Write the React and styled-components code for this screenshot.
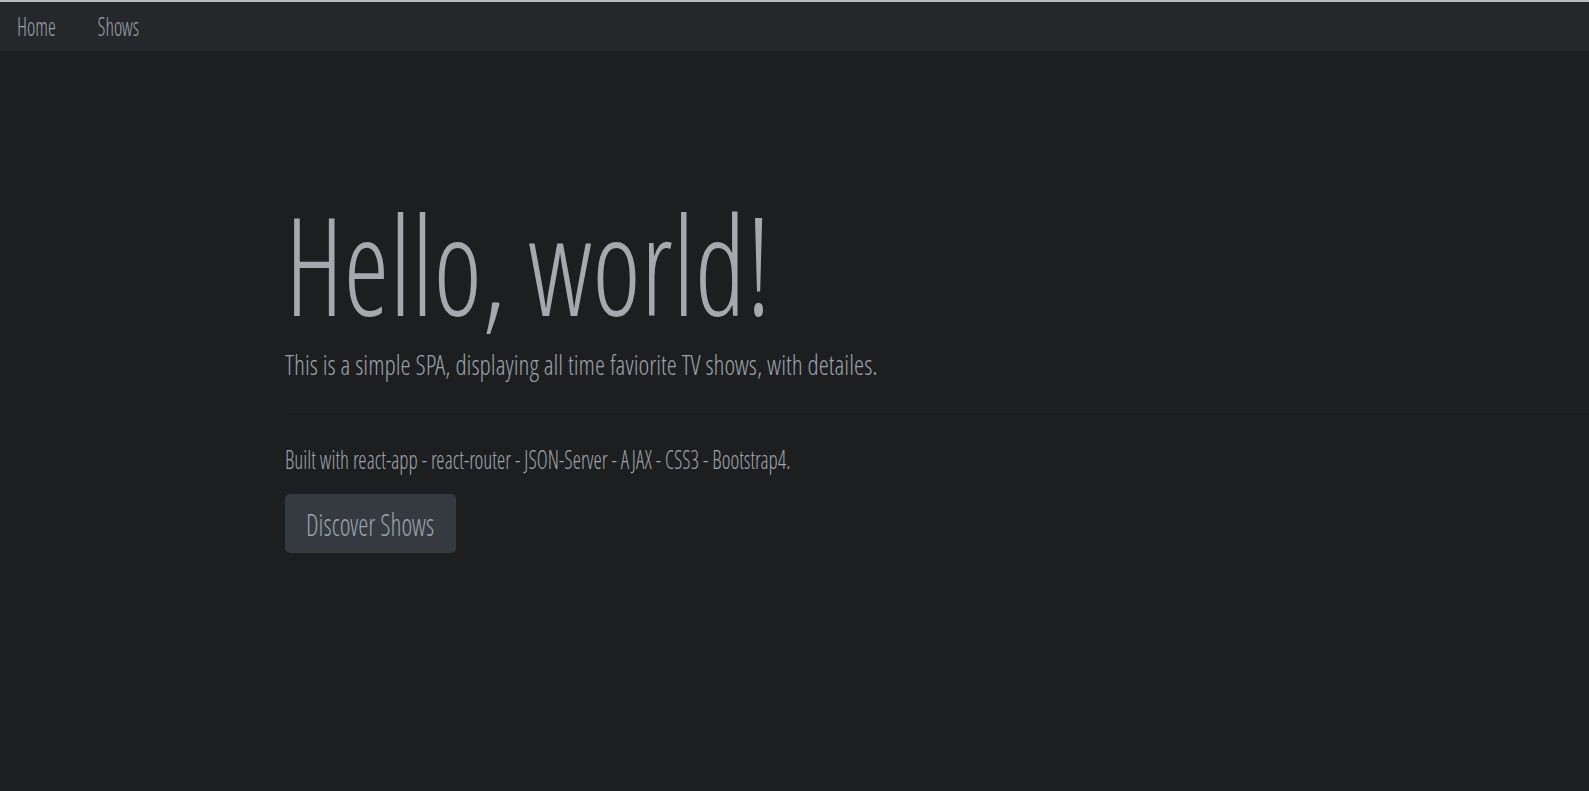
import React from "react";
import styled, { createGlobalStyle, css } from "styled-components";

const GlobalStyle = createGlobalStyle`
  html, body {
    margin: 0;
    padding: 0;
    background: #1d1e20;
    overflow: hidden;
  }
  body {
    font-family: "Open Sans Condensed Light", "Open Sans Condensed", "DejaVu Sans Condensed", sans-serif;
    font-weight: 300;
  }
`;

// squeeze the condensed face a bit more so it reads like Oswald
const narrow = (x) => css`
  transform: scaleX(${x});
  transform-origin: left center;
`;

const Page = styled.div`
  min-height: 100vh;
  border-top: 2px solid #bcbcbc;
  box-sizing: border-box;
`;

const NavBar = styled.nav`
  height: 49px;
  display: flex;
  align-items: center;
  padding-left: 17px;
  background: #26272a;
`;

const NavLinks = styled.div`
  display: flex;
  gap: 52px;
  ${narrow(0.8)}
`;

const NavLink = styled.a`
  font-size: 25px;
  line-height: 49px;
  color: #98a2ad;
  text-decoration: none;
  cursor: pointer;
`;

const Jumbotron = styled.section`
  padding: 148px 0 0 285px;
`;

const Title = styled.h1`
  margin: 0;
  font-size: 136px;
  line-height: 130px;
  font-weight: 300;
  color: #a6a8ad;
  white-space: nowrap;
  ${narrow(0.86)}
`;

const Lead = styled.p`
  margin: 21px 0 0;
  font-size: 28px;
  line-height: 28px;
  color: #9aa1a9;
  white-space: nowrap;
  ${narrow(0.92)}
`;

const Divider = styled.hr`
  margin: 36px 0 0;
  border: 0;
  border-top: 1px solid rgba(0, 0, 0, 0.12);
`;

const Note = styled.p`
  margin: 29px 0 0;
  font-size: 25px;
  line-height: 30px;
  color: #9ea5ad;
  white-space: nowrap;
  ${narrow(0.845)}
`;

const Button = styled.button`
  margin-top: 20px;
  width: 171px;
  height: 59px;
  padding: 0;
  border: 0;
  border-radius: 5px;
  background: #343a40;
  color: #9aa3ad;
  font-family: inherit;
  font-weight: 300;
  font-size: 32px;
  line-height: 59px;
  white-space: nowrap;
  cursor: pointer;
`;

const ButtonLabel = styled.span`
  display: inline-block;
  transform: scaleX(0.81);
`;

export default function App() {
  return (
    <>
      <GlobalStyle />
      <Page>
        <NavBar>
          <NavLinks>
            <NavLink>Home</NavLink>
            <NavLink>Shows</NavLink>
          </NavLinks>
        </NavBar>
        <Jumbotron>
          <Title>Hello, world!</Title>
          <Lead>
            This is a simple SPA, displaying all time faviorite TV shows, with
            detailes.
          </Lead>
          <Divider />
          <Note>
            Built with react-app - react-router - JSON-Server - AJAX - CSS3 -
            Bootstrap4.
          </Note>
          <Button>
            <ButtonLabel>Discover Shows</ButtonLabel>
          </Button>
        </Jumbotron>
      </Page>
    </>
  );
}
